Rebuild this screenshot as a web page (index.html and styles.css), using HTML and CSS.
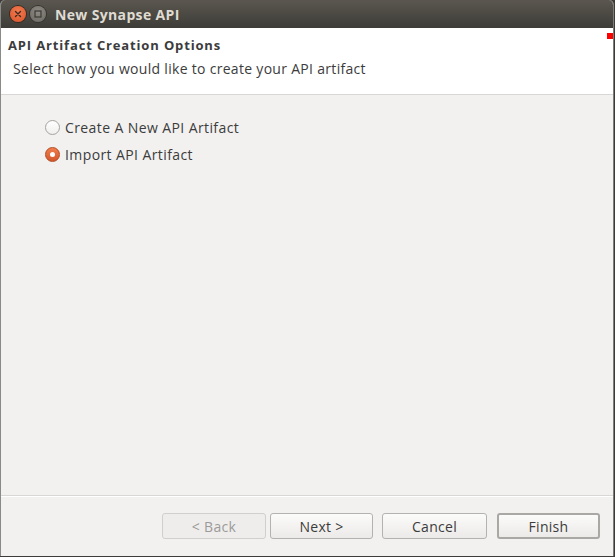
FILE: index.html
```html
<!DOCTYPE html>
<html>
<head>
<meta charset="utf-8">
<link rel="stylesheet" href="styles.css">
</head>
<body>
<div class="window">
  <div class="titlebar">
    <span class="tbtn close"><svg width="16" height="16" viewBox="0 0 16 16"><path d="M5.5 5.5 L10.5 10.5 M10.5 5.5 L5.5 10.5" stroke="#3c2a20" stroke-width="1.4" stroke-linecap="round"/></svg></span>
    <span class="tbtn max"><svg width="16" height="16" viewBox="0 0 16 16"><rect x="5" y="5" width="6" height="6" fill="none" stroke="#3a3935" stroke-width="1.2"/></svg></span>
    <span class="title">New Synapse API</span>
  </div>
  <div class="header">
    <div class="h-title">API Artifact Creation Options</div>
    <div class="h-desc">Select how you would like to create your API artifact</div>
    <span class="marker"></span>
  </div>
  <div class="content">
    <label class="radio"><span class="dot"></span>Create A New API Artifact</label>
    <label class="radio checked"><span class="dot"></span>Import API Artifact</label>
  </div>
  <div class="footer">
    <button class="btn back disabled">&lt; Back</button>
    <button class="btn next">Next &gt;</button>
    <button class="btn cancel">Cancel</button>
    <button class="btn finish default">Finish</button>
  </div>
</div>
</body>
</html>
```
FILE: styles.css
```css
* { box-sizing: border-box; }
html, body { margin: 0; padding: 0; background: #3c3b37; }
body { width: 615px; height: 557px; overflow: hidden; font-family: "Open Sans", "DejaVu Sans", sans-serif; }
.window {
  width: 614px; height: 556px;
  background: #f2f1f0;
  border-left: 1px solid #8a8a88;
  border-right: 1px solid #7c7c7a;
  display: flex; flex-direction: column;
  border-radius: 5px 5px 0 0;
  overflow: hidden;
}
.titlebar {
  height: 28px; flex: none;
  background: linear-gradient(#5b5750, #3d3c37);
  display: flex; align-items: center;
  padding-left: 9px;
}
.tbtn {
  width: 16px; height: 16px; border-radius: 50%;
  display: flex; align-items: center; justify-content: center;
  margin-right: 4px;
}
.close { background: radial-gradient(circle at 50% 35%, #f47a4e, #d8542b); box-shadow: 0 0 0 1px #3a2a22; }
.max { background: radial-gradient(circle at 50% 35%, #8e8b84, #6a6762); box-shadow: 0 0 0 1px #35342f; }
.title {
  color: #dfdbd2; font-weight: bold; font-size: 14px;
  margin-left: 5px; letter-spacing: 0.35px;
}
.header {
  position: relative;
  height: 67px; flex: none;
  background: #ffffff;
  border-bottom: 1px solid #d8d7d5;
  padding: 8px 0 0 7px;
}
.h-title { font-size: 13px; font-weight: bold; color: #3c3c3c; letter-spacing: 0.85px; }
.h-desc { font-size: 14px; color: #3c3c3c; margin-top: 5px; padding-left: 5px; letter-spacing: 0.3px; }
.marker { position: absolute; right: 0; top: 5px; width: 6px; height: 6px; background: #ff0000; }
.content {
  flex: 1;
  padding: 22px 0 0 44px;
  display: flex; flex-direction: column; gap: 7px;
  border-bottom: 1px solid #d8d7d5;
  box-shadow: 0 1px 0 #ffffff;
}
.radio {
  display: flex; align-items: center;
  font-size: 14px; color: #3c3c3c; height: 20px; letter-spacing: 0.4px;
}
.dot {
  width: 15px; height: 15px; border-radius: 50%;
  border: 1px solid #a4a3a0;
  background: linear-gradient(#ffffff, #f0efee);
  margin-right: 5px; position: relative;
}
.checked .dot {
  border-color: #b24b22;
  background: linear-gradient(#f07d4c, #d4572a);
}
.checked .dot::after {
  content: ""; position: absolute; left: 4px; top: 4px;
  width: 5px; height: 5px; border-radius: 50%; background: #ffffff;
}
.footer {
  height: 60px; flex: none;
  display: flex; align-items: flex-start;
  padding: 17px 0 0 161px;
}
.btn {
  height: 26px; flex: none;
  font-family: inherit; font-size: 14px; color: #3c3c3c; letter-spacing: 0.3px;
  border: 1px solid #b3b2b0; border-radius: 3px;
  background: linear-gradient(#fbfbfa, #eceae8);
  padding: 0;
}
.back { width: 104px; margin-right: 4px; }
.next { width: 103px; margin-right: 9px; }
.cancel { width: 105px; margin-right: 10px; }
.finish { width: 103px; }
.btn.disabled { color: #9c9b99; background: #eeedec; border-color: #d0cfcd; }
.btn.default { border: 2px solid #a9a8a5; }
```
